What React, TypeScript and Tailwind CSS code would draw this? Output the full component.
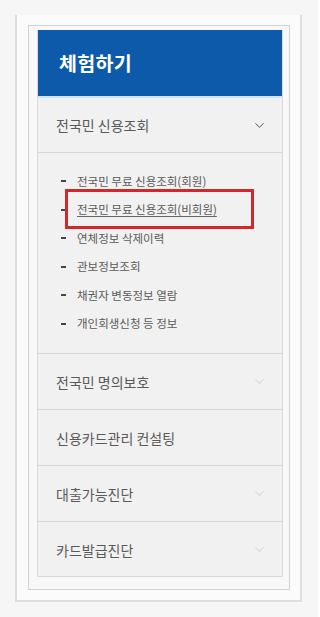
import { ChevronDown } from 'lucide-react';

const subItems = [
  '전국민 무료 신용조회(회원)',
  '전국민 무료 신용조회(비회원)',
  '연체정보 삭제이력',
  '관보정보조회',
  '채권자 변동정보 열람',
  '개인회생신청 등 정보',
];

const rows = [
  { label: '전국민 명의보호', arrow: true },
  { label: '신용카드관리 컨설팅', arrow: false },
  { label: '대출가능진단', arrow: true },
  { label: '카드발급진단', arrow: true, last: true },
];

function Chevron({ light }: { light?: boolean }) {
  return (
    <ChevronDown
      className={light ? 'w-[15px] h-[15px] text-[#cfcfcf]' : 'w-[15px] h-[15px] text-[#555]'}
      strokeWidth={1.6}
    />
  );
}

export default function App() {
  return (
    <div
      className="w-[318px] h-[617px] bg-[#f6f6f6] pl-[15px] pt-[15px]"
      style={{ fontFamily: '"Noto Sans CJK KR", "Noto Sans", sans-serif' }}
    >
      {/* outer frame */}
      <div className="w-[287px] h-[587px] bg-[#fbfbfb] border-l-2 border-r-2 border-b-2 border-[#dedede] pl-[11px] pt-[10px] pr-[10px]">
        {/* inner box */}
        <div className="w-[262px] h-[565px] bg-[#f8f8f8] border border-[#d2d2d2] pl-[8px] pt-[4px] pr-[6px]">
          {/* panel */}
          <div className="w-[246px] h-[547px] bg-[#f1f1f1] border-l border-r border-b border-[#dadada] flex flex-col">
            <div className="h-[68px] shrink-0 bg-[#0d5aab] border-b-2 border-[#cfe4f6] flex items-center pl-[21px]">
              <span className="text-white text-[19.5px] font-bold leading-none tracking-[0.3px]">체험하기</span>
            </div>

            <div className="h-[55px] shrink-0 border-b border-[#d6d6d6] flex items-center justify-between pl-[18px] pr-[15px]">
              <span className="text-[14px] text-[#5a5a5a] leading-none">전국민 신용조회</span>
              <Chevron />
            </div>

            <ul className="h-[201px] shrink-0 border-b border-[#d6d6d6] pt-[14px] pl-[23px] flex flex-col">
              {subItems.map((item, i) => (
                <li key={item} className="relative h-[28.5px] flex items-center gap-[11px]">
                  <span className="w-[5px] h-[2px] bg-[#444] shrink-0" />
                  <span
                    className={
                      i === 1
                        ? 'text-[11.5px] text-[#5a5a5a] leading-none underline underline-offset-2 decoration-[#666]'
                        : 'text-[11.5px] text-[#5a5a5a] leading-none'
                    }
                  >
                    {item}
                  </span>
                  {i === 1 && (
                    <span className="absolute left-[4px] top-[-7px] w-[189px] h-[40px] border-[3px] border-[#d4272c] pointer-events-none" />
                  )}
                </li>
              ))}
            </ul>

            {rows.map((row) => (
              <div
                key={row.label}
                className={
                  row.last
                    ? 'h-[55px] shrink-0 flex items-center justify-between pl-[18px] pr-[15px]'
                    : 'h-[56px] shrink-0 border-b border-[#d6d6d6] flex items-center justify-between pl-[18px] pr-[15px]'
                }
              >
                <span className="text-[14px] text-[#5a5a5a] leading-none">{row.label}</span>
                {row.arrow && <Chevron light />}
              </div>
            ))}
          </div>
        </div>
      </div>
    </div>
  );
}
